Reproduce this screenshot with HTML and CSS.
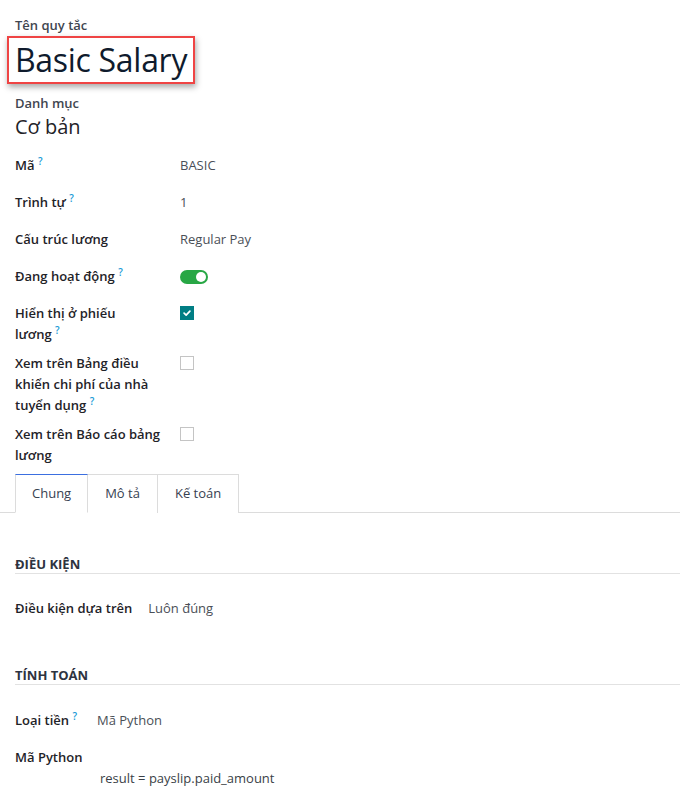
FILE: index.html
```html
<!DOCTYPE html>
<html lang="vi">
<head>
<meta charset="utf-8">
<link rel="stylesheet" href="styles.css">
</head>
<body>
<div class="sheet">
  <div class="title-block">
    <div class="small-label">Tên quy tắc</div>
    <div class="name-box">Basic Salary</div>
    <div class="small-label cat-label">Danh mục</div>
    <div class="category">Cơ bản</div>
  </div>

  <div class="fields">
    <div class="row"><div class="lbl">Mã <sup class="q">?</sup></div><div class="val">BASIC</div></div>
    <div class="row"><div class="lbl">Trình tự <sup class="q">?</sup></div><div class="val">1</div></div>
    <div class="row"><div class="lbl">Cấu trúc lương</div><div class="val">Regular Pay</div></div>
    <div class="row"><div class="lbl">Đang hoạt động <sup class="q">?</sup></div><div class="val"><span class="toggle"><span class="knob"></span></span></div></div>
    <div class="row"><div class="lbl">Hiển thị ở phiếu <span class="nw">lương <sup class="q">?</sup></span></div><div class="val"><span class="check on"><svg viewBox="0 0 14 14" width="14" height="14"><path d="M3.6 7.2 L6 9.4 L10.4 4.8" fill="none" stroke="#fff" stroke-width="2" stroke-linecap="round" stroke-linejoin="round"/></svg></span></div></div>
    <div class="row"><div class="lbl">Xem trên Bảng điều khiển chi phí của nhà <span class="nw">tuyển dụng <sup class="q">?</sup></span></div><div class="val"><span class="check"></span></div></div>
    <div class="row"><div class="lbl">Xem trên Báo cáo bảng lương</div><div class="val"><span class="check"></span></div></div>
  </div>

  <div class="tabs">
    <div class="tab active">Chung</div>
    <div class="tab">Mô tả</div>
    <div class="tab">Kế toán</div>
  </div>

  <div class="section">
    <div class="sec-title first">ĐIỀU KIỆN</div>
    <div class="row2"><div class="lbl">Điều kiện dựa trên</div><div class="val">Luôn đúng</div></div>
  </div>

  <div class="section">
    <div class="sec-title">TÍNH TOÁN</div>
    <div class="row2 lower"><div class="lbl wide-gap">Loại tiền <sup class="q">?</sup></div><div class="val">Mã Python</div></div>
    <div class="lbl py-lbl">Mã Python</div>
    <div class="code">result = payslip.paid_amount</div>
  </div>
</div>
</body>
</html>
```

FILE: styles.css
```css
html, body {
  margin: 0;
  padding: 0;
  background: #fff;
}
body {
  font-family: "Open Sans", "Noto Sans", sans-serif;
  color: #1f2328;
  width: 680px;
  overflow: hidden;
}
.sheet {
  padding-top: 16px;
}
.title-block {
  padding: 0 15px;
}
.small-label {
  font-size: 13px;
  font-weight: 600;
  color: #3f4650;
  line-height: 18px;
}
.name-box {
  display: inline-block;
  margin: 2px 0 0 -8px;
  padding: 0 6px 0 6px;
  border: 2px solid #ef4444;
  box-shadow: 1px 3px 6px rgba(0,0,0,0.35);
  font-size: 32px;
  line-height: 44px;
  color: #0f1b2d;
  letter-spacing: -0.3px;
}
.cat-label {
  margin-top: 10px;
}
.category {
  font-size: 20px;
  line-height: 30px;
  color: #1f2328;
}
.fields {
  padding: 13px 15px 0;
}
.row {
  display: flex;
  align-items: flex-start;
  min-height: 29px;
  margin-bottom: 8px;
}
.row .lbl {
  width: 147px;
  margin-right: 18px;
}
.nw {
  white-space: nowrap;
}
.lbl {
  font-size: 13px;
  font-weight: 600;
  line-height: 21px;
  color: #1f2328;
}
.val {
  font-size: 13px;
  line-height: 21px;
  color: #4a4f57;
}
.q {
  color: #1a9bd7;
  font-size: 10px;
  font-weight: 600;
  vertical-align: top;
  position: relative;
  top: -4px;
}
.toggle {
  display: inline-block;
  width: 28px;
  height: 14px;
  border-radius: 7px;
  background: #28a745;
  position: relative;
  vertical-align: middle;
  margin-top: -2px;
}
.knob {
  position: absolute;
  right: 2px;
  top: 2px;
  width: 10px;
  height: 10px;
  border-radius: 50%;
  background: #fff;
}
.check {
  display: inline-flex;
  align-items: center;
  justify-content: center;
  width: 14px;
  height: 14px;
  box-sizing: border-box;
  border: 1px solid #c4c4c4;
  background: #fff;
  vertical-align: middle;
  margin-top: -3px;
}
.check.on {
  background: #017e84;
  border-color: #017e84;
}
.tabs {
  display: flex;
  padding-left: 15px;
  border-bottom: 1px solid #dcdcdc;
  margin-top: 0;
}
.tab {
  font-size: 13px;
  line-height: 37px;
  padding: 0 17px;
  border: 1px solid #dcdcdc;
  border-left: none;
  border-bottom: none;
  color: #374151;
  margin-bottom: -1px;
  background: #fff;
}
.tab:first-child {
  border-left: 1px solid #dcdcdc;
  padding: 0 16px;
}
.tab.active {
  border-top: 1px solid #3b6fe0;
  border-bottom: 1px solid #fff;
}
.section {
  padding: 0 0 0 15px;
}
.sec-title {
  font-size: 13px;
  font-weight: 700;
  color: #2d3340;
  line-height: 18px;
  padding-bottom: 0;
  border-bottom: 1px solid #e2e2e2;
  margin-top: 47px;
}
.sec-title.first {
  margin-top: 42px;
}
.row2 {
  display: flex;
  margin-top: 24px;
}
.row2.lower {
  margin-top: 25px;
}
.row2 .lbl {
  margin-right: 16px;
}
.row2 .lbl.wide-gap {
  margin-right: 20px;
}
.py-lbl {
  margin-top: 16px;
}
.code {
  font-size: 13px;
  line-height: 21px;
  color: #3a3f47;
  margin-left: 85px;
}
```
